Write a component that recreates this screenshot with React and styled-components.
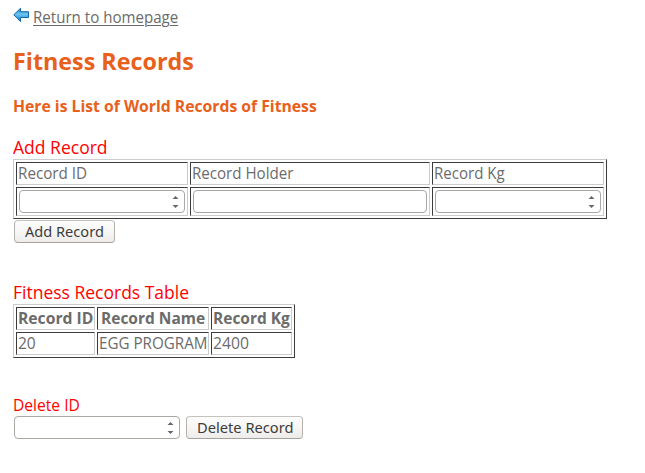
import React from "react";
import styled, { createGlobalStyle } from "styled-components";

const Global = createGlobalStyle`
  body { margin: 0; background: #fff; font-family: "Open Sans", "Noto Sans", sans-serif; font-size: 16px; color: #6b6b6b; }
`;
const Page = styled.main`
  display: flex; flex-direction: column; align-items: flex-start;
  padding: 6px 0 0 13px; height: 467px; box-sizing: border-box; overflow: hidden;
`;
const Fit = styled.span`
  display: inline-block; white-space: nowrap; transform-origin: left center;
  transform: scaleX(${(p) => p.$x || 1});
`;
const BackLink = styled.a`
  display: flex; height: 22px; line-height: 22px; color: #6b6b6b; gap: 3px;
  text-decoration: underline; text-underline-offset: 2px; text-decoration-thickness: 1px;
  svg { margin-top: 1px; flex: none; }
`;
const Title = styled.h1`
  margin: 16px 0 0; height: 34px; line-height: 34px; font-size: 24px; font-weight: 700; color: #e8601a;
`;
const Subtitle = styled.h2`
  margin: 17px 0 0; height: 22px; line-height: 22px; font-size: 16px; font-weight: 700; color: #e8601a;
`;
const Caption = styled.div`
  margin-top: ${(p) => p.$top}px; height: ${(p) => p.$h || 24}px; line-height: 24px;
  font-size: ${(p) => p.$size || 18}px; color: #f00;
`;
const Grid = styled.div`
  display: grid; grid-template-columns: ${(p) => p.$cols}; grid-template-rows: ${(p) => p.$rows};
  gap: 2px; padding: 2px; border: 1px solid; border-color: #ccc #3c3c3c #3c3c3c #ccc;
`;
const Cell = styled.div`
  box-sizing: border-box; border: 1px solid; border-color: #3c3c3c #ccc #ccc #3c3c3c;
  padding: ${(p) => (p.$field ? "2px" : "0 1px")}; line-height: 21px; min-width: 0;
  padding-left: ${(p) => p.$indent}px;
  font-weight: ${(p) => (p.$head ? 700 : 400)};
`;
const Field = styled.div`
  display: flex; justify-content: flex-end; align-items: center; box-sizing: border-box;
  width: ${(p) => p.$w}px; height: 23px; padding-right: 5px;
  border: 1px solid #aaa8a3; border-radius: 4px; background: #fff;
`;
const Actions = styled.div`
  display: flex; gap: 6px; padding-left: 1px; margin-top: ${(p) => p.$top || 0}px;
`;
const Button = styled.button`
  box-sizing: border-box; width: ${(p) => p.$w}px; height: 23px; padding: 0 0 1px 10px; text-align: left;
  border: 1px solid; border-color: #c6c3be #b5b2ad #a5a29d #b5b2ad; border-radius: 4px;
  background: linear-gradient(#fdfdfd, #f7f6f5 50%, #eeeceb);
  font: 15px/20px "Noto Sans", sans-serif; color: #3c3c3c;
`;

const Arrow = () => (
  <svg width="17" height="16" viewBox="0 0 17 16">
    <defs>
      <linearGradient id="blue" x1="0" y1="0" x2="0" y2="1">
        <stop offset="0" stopColor="#1b86cc" />
        <stop offset=".45" stopColor="#6cc4f0" />
        <stop offset="1" stopColor="#0a7cc4" />
      </linearGradient>
    </defs>
    <path d="M.8 7.8 7.5 1.3V4.7H15.5V10.5H7.5V14.5Z" fill="url(#blue)" stroke="#1268a8" strokeLinejoin="round" />
  </svg>
);
const Spinner = () => (
  <svg width="7" height="13" viewBox="0 0 7 13">
    <path d="M.5 4 3.5 1 6.5 4ZM.5 10H6.5L3.5 13Z" fill="#666" />
  </svg>
);

export default function App() {
  return (
    <>
      <Global />
      <Page>
        <BackLink href="#"><Arrow /><Fit $x={0.943}>Return to homepage</Fit></BackLink>
        <Title><Fit $x={0.971}>Fitness Records</Fit></Title>
        <Subtitle><Fit $x={0.983}>Here is List of World Records of Fitness</Fit></Subtitle>
        <Caption $top={18}><Fit $x={0.974}>Add Record</Fit></Caption>
        <Grid $cols="172px 240px 172px" $rows="23px 29px">
          <Cell><Fit $x={0.95}>Record ID</Fit></Cell>
          <Cell><Fit $x={0.944}>Record Holder</Fit></Cell>
          <Cell><Fit $x={0.94}>Record Kg</Fit></Cell>
          <Cell $field><Field $w={166}><Spinner /></Field></Cell>
          <Cell $field><Field $w={234} /></Cell>
          <Cell $field><Field $w={166}><Spinner /></Field></Cell>
        </Grid>
        <Actions $top={1}><Button $w={101}><Fit $x={0.972}>Add Record</Fit></Button></Actions>
        <Caption $top={37}><Fit $x={0.972}>Fitness Records Table</Fit></Caption>
        <Grid $cols="79px 112px 81px" $rows="23px 23px">
          <Cell $head><Fit $x={0.98}>Record ID</Fit></Cell>
          <Cell $head $indent={3}><Fit $x={0.968}>Record Name</Fit></Cell>
          <Cell $head><Fit $x={0.968}>Record Kg</Fit></Cell>
          <Cell><Fit $x={0.97}>20</Fit></Cell>
          <Cell><Fit $x={0.949}>EGG PROGRAM</Fit></Cell>
          <Cell><Fit $x={0.98}>2400</Fit></Cell>
        </Grid>
        <Caption $top={35} $size={16} $h={23}><Fit $x={0.975}>Delete ID</Fit></Caption>
        <Actions>
          <Field $w={166}><Spinner /></Field>
          <Button $w={117}><Fit $x={0.977}>Delete Record</Fit></Button>
        </Actions>
      </Page>
    </>
  );
}
